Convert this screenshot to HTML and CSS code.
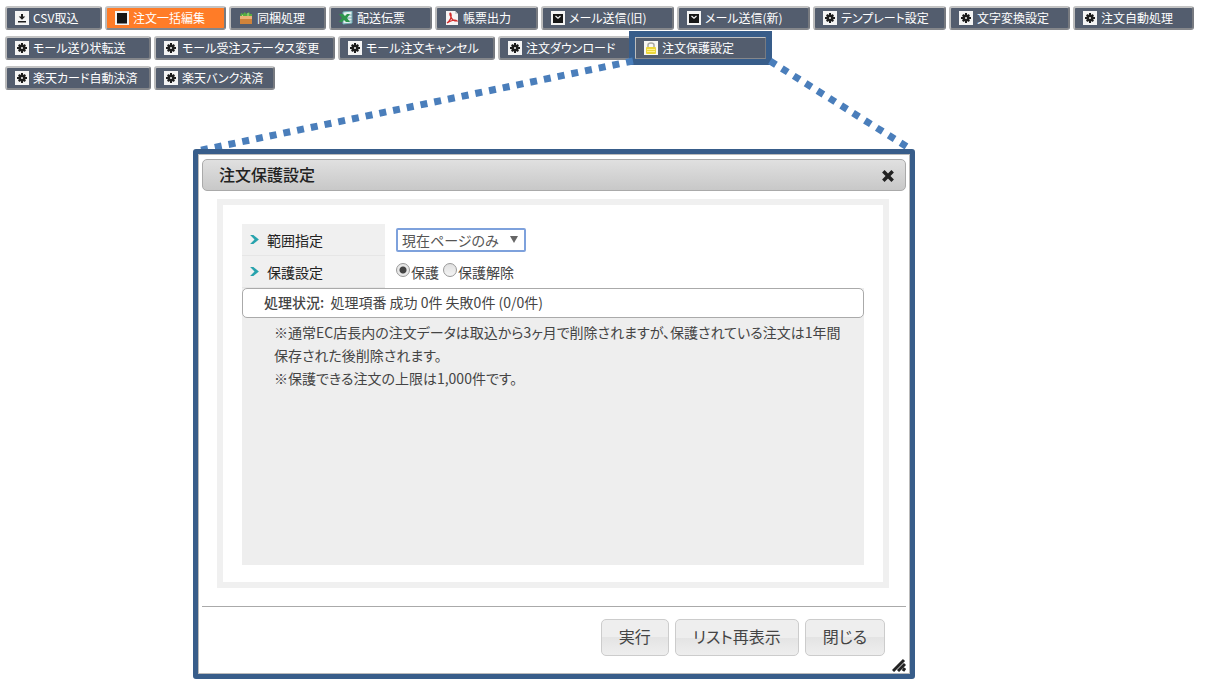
FILE: index.html
```html
<!DOCTYPE html>
<html lang="ja">
<head>
    <meta charset="UTF-8">
    <meta name="viewport" content="width=device-width, initial-scale=1.0">
    <title>注文保護設定</title>
    <link rel="stylesheet" href="styles.css">
</head>
<body>
    <!-- Shared icons -->
    <svg class="sprite" aria-hidden="true">
        <symbol id="gear" viewBox="0 0 14 14">
            <rect width="14" height="14" fill="#f4f4f4"/>
            <path fill="none" stroke="#1c1c1c" stroke-width="2" d="M7 2v10M2 7h10M3.700 3.700l6.600 6.600M10.300 3.700l-6.600 6.600"/>
            <circle cx="7" cy="7" r="3.600" fill="#1c1c1c"/>
            <circle cx="7" cy="7" r="1" fill="#f4f4f4"/>
        </symbol>
        <symbol id="download" viewBox="0 0 14 14">
            <rect width="14" height="14" fill="#f4f4f4"/>
            <path fill="#1c1c1c" d="M6 3h2v2.500h2.300L7 8.800 3.700 5.500H6zM3 10h8v1.500H3z"/>
        </symbol>
        <symbol id="square" viewBox="0 0 14 14">
            <rect width="14" height="14" fill="#f4f4f4"/>
            <rect x="2" y="2" width="10" height="10.500" fill="#161616"/>
        </symbol>
        <symbol id="mail" viewBox="0 0 14 14">
            <rect width="14" height="14" fill="#f4f4f4"/>
            <rect x="2" y="3" width="10" height="9" fill="#161616"/>
            <path d="M4.500 5L7 7.300 9.500 5" fill="none" stroke="#f4f4f4" stroke-width="1.200"/>
        </symbol>
        <symbol id="box" viewBox="0 0 14 14">
            <path d="M1 6l1-4 2 1 2-2 1 2 3-2 1 2 2 0v4z" fill="#58ad42"/>
            <path d="M3 4l2 2M9 2v4" stroke="#b6df8c"/>
            <rect x="1" y="5" width="12" height="8" fill="#d0833a"/>
            <path d="M1 5h12v3H1z" fill="#eeb277"/>
        </symbol>
        <symbol id="excel" viewBox="0 0 14 14">
            <path d="M4 1l9-1v12l-9 1z" fill="#e3f1ee" stroke="#71aeb6"/>
            <path d="M8 4h5M8 7h5M8 10h5" stroke="#75a9b2"/>
            <path d="M0 3l4 0 2 2 2-2h3L8 7l3 4H7L5 9l-2 2H0l3-4z" fill="#2d954b"/>
        </symbol>
        <symbol id="pdf" viewBox="0 0 14 14">
            <path d="M1 0h9l3 3v11H1z" fill="#f7f4f4"/>
            <path d="M10 0v3h3" fill="#d4d0d0"/>
            <path d="M2 12c3-2 5-6 4-9-1-2-2 0 0 3 1 3 3 4 6 4-2-2-7 0-10 2z" fill="none" stroke="#d22b2b" stroke-width="1.200"/>
        </symbol>
        <symbol id="lock" viewBox="0 0 14 14">
            <rect width="14" height="14" fill="#f7f7f3"/>
            <path d="M4 7V4q0-2 3-2t3 2v3" fill="none" stroke="#aaa9a2" stroke-width="1.500"/>
            <rect x="2" y="6" width="10" height="7" rx="1" fill="#ecd63a"/>
            <path d="M3 8.500h8M3 10.500h8" stroke="#fff18a"/>
        </symbol>
    </svg>

    <!-- Toolbar -->
    <nav class="toolbar">
        <div class="toolbar-row">
            <button type="button" class="tool xs"><svg><use href="#download"/></svg>CSV取込</button>
            <button type="button" class="tool md active"><svg><use href="#square"/></svg>注文一括編集</button>
            <button type="button" class="tool xs"><svg><use href="#box"/></svg>同梱処理</button>
            <button type="button" class="tool sm"><svg><use href="#excel"/></svg>配送伝票</button>
            <button type="button" class="tool sm"><svg><use href="#pdf"/></svg>帳票出力</button>
            <button type="button" class="tool lg"><svg><use href="#mail"/></svg>メール送信(旧)</button>
            <button type="button" class="tool lg"><svg><use href="#mail"/></svg>メール送信(新)</button>
            <button type="button" class="tool lg"><svg><use href="#gear"/></svg>テンプレート設定</button>
            <button type="button" class="tool md"><svg><use href="#gear"/></svg>文字変換設定</button>
            <button type="button" class="tool md"><svg><use href="#gear"/></svg>注文自動処理</button>
        </div>
        <div class="toolbar-row">
            <button type="button" class="tool xl"><svg><use href="#gear"/></svg>モール送り状転送</button>
            <button type="button" class="tool xxxl"><svg><use href="#gear"/></svg>モール受注ステータス変更</button>
            <button type="button" class="tool xxl"><svg><use href="#gear"/></svg>モール注文キャンセル</button>
            <button type="button" class="tool lg"><svg><use href="#gear"/></svg>注文ダウンロード</button>
            <button type="button" class="tool lg marked"><svg><use href="#lock"/></svg>注文保護設定</button>
        </div>
        <div class="toolbar-row">
            <button type="button" class="tool xl"><svg><use href="#gear"/></svg>楽天カード自動決済</button>
            <button type="button" class="tool md"><svg><use href="#gear"/></svg>楽天バンク決済</button>
        </div>
    </nav>

    <!-- Dialog -->
    <div class="callout">
        <!-- Dotted leaders from the marked button to the dialog corners -->
        <svg class="leaders" viewBox="0 0 722 92" preserveAspectRatio="none" aria-hidden="true">
            <path d="M440 4L4 94M577 4L716 91"/>
        </svg>

        <section class="dialog" role="dialog" aria-labelledby="dialogTitle">
            <header class="dialog-title">
                <h1 id="dialogTitle">注文保護設定</h1>
                <button type="button" class="close" aria-label="閉じる">
                    <svg viewBox="0 0 12 12"><path d="M2 2l8 8M10 2l-8 8"/></svg>
                </button>
            </header>

            <div class="frame">
                <form class="panel" id="protectForm">
                    <div class="row">
                        <label class="name" for="range"><svg viewBox="0 0 8 10"><path d="M0 1h3l5 4-5 4H0l4-4z"/></svg>範囲指定</label>
                        <div class="value">
                            <span class="select">
                                <select id="range">
                                    <option>現在ページのみ</option>
                                </select>
                            </span>
                        </div>
                    </div>
                    <div class="row" role="radiogroup" aria-labelledby="protectLabel">
                        <span class="name" id="protectLabel"><svg viewBox="0 0 8 10"><path d="M0 1h3l5 4-5 4H0l4-4z"/></svg>保護設定</span>
                        <div class="value">
                            <label class="radio"><input type="radio" name="protect" checked>保護</label>
                            <label class="radio"><input type="radio" name="protect">保護解除</label>
                        </div>
                    </div>
                    <div class="status"><b>処理状況:</b>&nbsp; 処理項番 成功 0件 失敗0件 (0/0件)</div>
                    <div class="notes">
                        <p>※通常EC店長内の注文データは取込から3ヶ月で削除されますが、保護されている注文は1年間<br>保存された後削除されます。</p>
                        <p>※保護できる注文の上限は1,000件です。</p>
                    </div>
                </form>
            </div>

            <footer class="dialog-buttons">
                <button type="submit" form="protectForm">実行</button>
                <button type="button">リスト再表示</button>
                <button type="button">閉じる</button>
                <svg class="grip" viewBox="0 0 14 14"><path d="M1 13L12 2M6 13l7-7M11 13l2-3"/></svg>
            </footer>
        </section>
    </div>
</body>
</html>
```

FILE: styles.css
```css
* {
    box-sizing: border-box;
}

body {
    margin: 0;
    padding: 6px 5px 8px;
    background: #fff;
    color: #444;
    font-family: "Noto Sans CJK JP", sans-serif;
    font-size: 14px;
    font-feature-settings: "palt";
}

button,
select {
    font-family: inherit;
    font-feature-settings: inherit;
}

.sprite {
    position: absolute;
    width: 0;
    height: 0;
}

/* Toolbar */
.toolbar {
    display: flex;
    flex-direction: column;
    gap: 6px;
}

.toolbar-row {
    display: flex;
    gap: 3px;
}

.tool {
    display: flex;
    align-items: center;
    gap: 4px;
    height: 24px;
    padding: 0 0 0 8px;
    border: 2px solid;
    border-color: #c4c4c4 #777a80 #85878b #bcbcbc;
    border-radius: 3px;
    background: #535d6e;
    color: #fff;
    font-size: 12px;
    line-height: 18px;
    white-space: nowrap;
}

.tool svg {
    flex: none;
    width: 14px;
    height: 14px;
}

.tool.active {
    background: #ff7c27;
}

.xs { width: 97px; }
.sm { width: 103px; }
.md { width: 121px; }
.lg { width: 133px; }
.xl { width: 146px; }
.xxl { width: 157px; }
.xxxl { width: 181px; }

.tool.marked {
    border-radius: 0;
    outline: 6px solid #385d8a;
    outline-offset: -1px;
}

/* Leaders and dialog */
.callout {
    position: relative;
    width: 722px;
    max-width: 100%;
    margin: 59px 0 0 188px;
}

.leaders {
    position: absolute;
    bottom: 100%;
    left: 0;
    width: 100%;
    height: 92px;
}

.leaders path {
    fill: none;
    stroke: #4a7ebb;
    stroke-width: 7;
    stroke-dasharray: 7 7;
}

.dialog {
    padding: 5px 4px 0;
    border: 5px solid #385d8a;
    border-radius: 3px;
    background: #fff;
    box-shadow: inset 0 0 0 1px #bbb;
}

.dialog-title {
    display: flex;
    align-items: center;
    justify-content: space-between;
    height: 32px;
    padding: 0 10px 2px 16px;
    border: 1px solid #aaa;
    border-radius: 5px;
    background: linear-gradient(#e0e0e0, #c8c8c8);
}

.dialog-title h1 {
    margin: 0;
    color: #222;
    font-size: 16px;
    line-height: 24px;
    font-weight: 500;
}

.close {
    display: flex;
    padding: 4px 0 0;
    border: 0;
    background: none;
}

.close svg {
    width: 14px;
    height: 14px;
}

.close path {
    stroke: #222;
    stroke-width: 3;
}

.frame {
    margin: 8px 17px 0 15px;
    padding: 19px 19px 17px;
    border: 6px solid #f0f0f0;
}

.panel {
    min-height: 341px;
    background: #eee;
}

.row {
    display: flex;
    background: #fff;
}

.name {
    display: flex;
    align-items: center;
    flex: none;
    gap: 8px;
    width: 143px;
    height: 32px;
    padding-left: 8px;
    border-bottom: 1px solid #e6e6e6;
    background: #f0f0f0;
    color: #222;
}

.name svg {
    width: 9px;
    height: 11px;
    fill: #28a3ad;
}

.value {
    display: flex;
    align-items: center;
    gap: 4px;
    padding-left: 11px;
}

.select {
    position: relative;
}

.select::after {
    content: "";
    position: absolute;
    top: 8px;
    right: 8px;
    border: 4px solid transparent;
    border-top: 7px solid #666;
    border-bottom: 0;
    pointer-events: none;
}

.select select {
    display: block;
    appearance: none;
    width: 130px;
    height: 24px;
    padding: 0 4px;
    border: 2px solid #7ea1dc;
    border-radius: 2px;
    background: #fff;
    color: #555;
    font-size: 14px;
}

.radio {
    display: flex;
    align-items: center;
}

.radio input {
    appearance: none;
    width: 14px;
    height: 14px;
    margin: 0 1px 4px 0;
    border: 1px solid #999;
    border-radius: 50%;
    background: linear-gradient(#e0e0e0, #f4f4f4);
}

.radio input:checked {
    background: radial-gradient(circle, #444 0 3px, #e8e8e8 4px);
}

.status {
    height: 30px;
    padding: 0 21px;
    border: 1px solid #aaa;
    border-radius: 5px;
    background: #fff;
    line-height: 26px;
}

.status b {
    font-weight: 500;
}

.notes {
    padding: 3px 0 0 32px;
    line-height: 23px;
    white-space: nowrap;
}

.notes p {
    margin: 0;
}

/* Dialog buttons */
.dialog-buttons {
    position: relative;
    display: flex;
    justify-content: flex-end;
    gap: 6px;
    margin-top: 18px;
    padding: 12px 21px 18px;
    border-top: 1px solid #aaa;
}

.dialog-buttons button {
    height: 37px;
    padding: 0 17px 3px;
    border: 1px solid #ccc;
    border-radius: 5px;
    background: linear-gradient(#eee 50%, #e4e4e4 50%, #eee);
    color: #444;
    font-size: 16px;
}

.grip {
    position: absolute;
    right: 0;
    bottom: 2px;
    width: 14px;
    height: 14px;
    fill: none;
    stroke: #222;
    stroke-width: 3;
}
```
